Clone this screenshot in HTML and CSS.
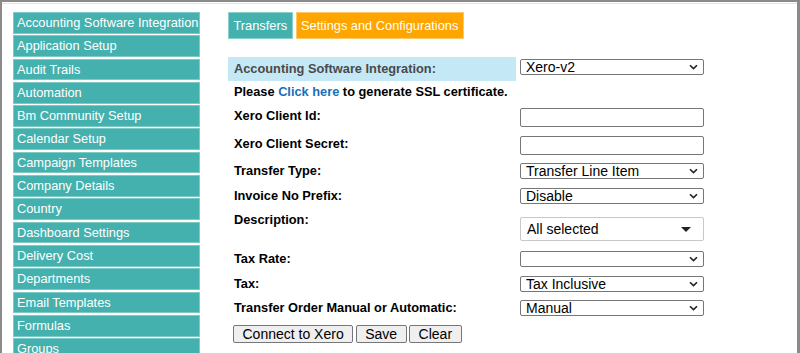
FILE: index.html
```html
<!DOCTYPE html>
<html lang="en">
<head>
    <meta charset="UTF-8">
    <meta name="viewport" content="width=device-width, initial-scale=1.0">
    <title>Accounting Software Integration</title>
    <link rel="stylesheet" href="styles.css">
</head>
<body>
    <div class="page">
        <ul class="side-menu">
            <li>Accounting Software Integration</li>
            <li>Application Setup</li>
            <li>Audit Trails</li>
            <li>Automation</li>
            <li>Bm Community Setup</li>
            <li>Calendar Setup</li>
            <li>Campaign Templates</li>
            <li>Company Details</li>
            <li>Country</li>
            <li>Dashboard Settings</li>
            <li>Delivery Cost</li>
            <li>Departments</li>
            <li>Email Templates</li>
            <li>Formulas</li>
            <li>Groups</li>
        </ul>

        <div class="main">
            <div class="tabs">
                <span class="tab tab-teal">Transfers</span>
                <span class="tab tab-orange">Settings and Configurations</span>
            </div>

            <div class="settings-form">
                <div class="form-head">
                    <div class="head-label">Accounting Software Integration:</div>
                    <select class="field">
                        <option>Xero-v2</option>
                    </select>
                </div>

                <p class="note">Please <a href="#">Click here</a> to generate SSL certificate.</p>

                <div class="form-row">
                    <label>Xero Client Id:</label>
                    <input type="text" class="field text-field">
                </div>
                <div class="form-row">
                    <label>Xero Client Secret:</label>
                    <input type="text" class="field text-field">
                </div>
                <div class="form-row">
                    <label>Transfer Type:</label>
                    <select class="field">
                        <option>Transfer Line Item</option>
                    </select>
                </div>
                <div class="form-row">
                    <label>Invoice No Prefix:</label>
                    <select class="field">
                        <option>Disable</option>
                    </select>
                </div>
                <div class="form-row desc-row">
                    <label>Description:</label>
                    <div class="field multi-select">
                        <span>All selected</span>
                        <span class="caret"></span>
                    </div>
                </div>
                <div class="form-row">
                    <label>Tax Rate:</label>
                    <select class="field">
                        <option></option>
                    </select>
                </div>
                <div class="form-row">
                    <label>Tax:</label>
                    <select class="field">
                        <option>Tax Inclusive</option>
                    </select>
                </div>
                <div class="form-row">
                    <label>Transfer Order Manual or Automatic:</label>
                    <select class="field">
                        <option>Manual</option>
                    </select>
                </div>

                <div class="actions">
                    <button type="button">Connect to Xero</button>
                    <button type="button">Save</button>
                    <button type="button">Clear</button>
                </div>
            </div>
        </div>
    </div>
</body>
</html>
```

FILE: styles.css
```css
html, body {
    height: 353px;
}

body {
    margin: 0;
    box-sizing: border-box;
    border: 2px solid #8a8a8a;
    border-right-width: 3px;
    border-bottom: none;
    overflow: hidden;
    font-family: "Liberation Sans", Arial, sans-serif;
    font-size: 12.8px;
    color: #000;
    background-color: #fff;
}

.page {
    display: flex;
    align-items: flex-start;
    margin-top: 1px;
    border-top: 1px solid #e4e4e4;
    padding: 8px 0 0 11px;
}

/* left menu */
.side-menu {
    list-style: none;
    margin: 0;
    padding: 0;
    width: 187px;
    flex-shrink: 0;
}

.side-menu li {
    background-color: #45b1ae;
    border: 1px solid #7dcac6;
    color: #fff;
    line-height: 19.7px;
    padding-left: 3px;
    margin-bottom: 1.6px;
    white-space: nowrap;
    overflow: hidden;
}

.main {
    margin-left: 28px;
}

/* tabs */
.tabs {
    display: flex;
    gap: 3px;
}

.tab {
    line-height: 25px;
    padding: 0 4.5px;
    color: #fff;
    border: 1px solid;
}

.tab-teal {
    background-color: #45b1ae;
    border-color: #8ad0cc;
}

.tab-orange {
    background-color: #ffa500;
    border-color: #ffc766;
}

/* form */
.settings-form {
    margin-top: 18px;
    width: 476px;
}

.form-head {
    display: flex;
    align-items: flex-start;
    height: 24px;
}

.head-label {
    width: 288px;
    box-sizing: border-box;
    padding-left: 6px;
    line-height: 24px;
    background-color: #c4e8f6;
    color: #4a4a4a;
    font-weight: bold;
}

.form-head .field {
    margin-top: 1.5px;
}

.note {
    margin: 3px 0 8px;
    padding-left: 6px;
    line-height: 16px;
    font-weight: bold;
}

.note a {
    color: #1a6fba;
    text-decoration: none;
}

.form-row {
    display: flex;
    align-items: flex-start;
    margin-bottom: 8.5px;
}

.form-row label {
    width: 288px;
    box-sizing: border-box;
    padding-left: 6px;
    line-height: 16px;
    font-weight: bold;
}

.field {
    width: 184px;
    box-sizing: border-box;
    margin: 0 0 0 4px;
    font-family: "Liberation Sans", Arial, sans-serif;
    font-size: 14px;
    color: #000;
    background-color: #fff;
    border: 1px solid #767676;
    border-radius: 2px;
}

select.field {
    -webkit-appearance: none;
    appearance: none;
    height: 16px;
    line-height: 14px;
    padding: 0 18px 0 5px;
    background-image: url("data:image/svg+xml,%3Csvg xmlns='http://www.w3.org/2000/svg' width='9' height='6' viewBox='0 0 9 6'%3E%3Cpath d='M1 1.2l3.5 3.4L8 1.2' fill='none' stroke='%23222' stroke-width='1.6'/%3E%3C/svg%3E");
    background-repeat: no-repeat;
    background-position: right 5px center;
    outline: none;
}

.text-field {
    height: 19px;
    padding: 0 3px;
}

.desc-row {
    margin-bottom: 10px;
}

.multi-select {
    margin-top: 5px;
    height: 24px;
    border-color: #c8c8c8;
    display: flex;
    align-items: center;
    justify-content: space-between;
    padding: 0 12px 0 6px;
}

.caret {
    width: 0;
    height: 0;
    border-left: 5px solid transparent;
    border-right: 5px solid transparent;
    border-top: 5px solid #222;
}

.actions {
    display: flex;
    gap: 2.5px;
    margin-top: 1.5px;
    padding-left: 5px;
}

.actions button {
    height: 18px;
    padding: 0 8.5px;
    font-family: "Liberation Sans", Arial, sans-serif;
    font-size: 14px;
    color: #000;
    background-color: #efefef;
    border: 1px solid #767676;
    border-radius: 2px;
}
```
